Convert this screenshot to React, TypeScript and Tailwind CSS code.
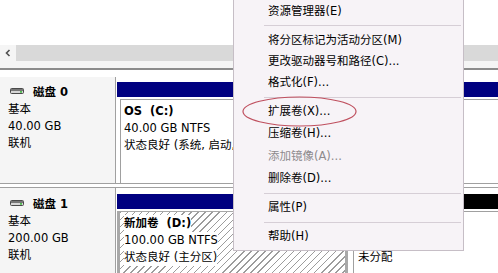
const menuItems: { label?: string; h?: number; disabled?: boolean; sep?: string }[] = [
  { label: "资源管理器(E)", h: 24 },
  { sep: "pt-[1px] pb-[4px]" },
  { label: "将分区标记为活动分区(M)", h: 22 },
  { label: "更改驱动器号和路径(C)...", h: 20 },
  { label: "格式化(F)...", h: 21 },
  { sep: "pt-[4px] pb-[3px]" },
  { label: "扩展卷(X)...", h: 21 },
  { label: "压缩卷(H)...", h: 24 },
  { label: "添加镜像(A)...", h: 21, disabled: true },
  { label: "删除卷(D)...", h: 23 },
  { sep: "pt-[3px] pb-[3px]" },
  { label: "属性(P)", h: 22 },
  { sep: "pt-[3px] pb-[3px]" },
  { label: "帮助(H)", h: 22 },
]

const DiskIcon = () => (
  <svg width="14" height="6" viewBox="0 0 14 6" className="mb-[4px]">
    <rect x="0.5" y="0.5" width="13" height="5" rx="1" fill="#d6d6d6" stroke="#4a4a4a" />
    <rect x="1" y="1" width="12" height="2" fill="#777" />
    <rect x="10" y="3.2" width="2" height="1.4" fill="#2fb82f" />
  </svg>
)

const DiskLabel = ({ name, size, top }: { name: string; size: string; top: string }) => (
  <div className={`w-[116px] shrink-0 border-r border-[#a0a0a0] bg-[#f5f5f5] pl-[8px] leading-[17px] ${top}`}>
    <div className="flex items-center gap-[9px] pl-[2px] font-bold">
      <DiskIcon />
      <span>{name}</span>
    </div>
    <div>基本</div>
    <div>{size}</div>
    <div>联机</div>
  </div>
)

export default function App() {
  return (
    <div className="relative h-[273px] w-[498px] overflow-hidden bg-white font-['DejaVu_Sans','Noto_Sans_CJK_SC',sans-serif] text-[11.5px] text-black">
      {/* volume list pane */}
      <div className="h-[45px]" />
      <div className="flex h-[16px]">
        <div className="flex w-[16px] items-center justify-center bg-[#f5f5f5]">
          <svg width="6" height="8" viewBox="0 0 6 8">
            <path d="M4.5 1 L1.5 4 L4.5 7" fill="none" stroke="#505050" strokeWidth="1.6" />
          </svg>
        </div>
        <div className="flex-1 bg-[#d9d9d9]" />
      </div>
      <div className="h-[7px] bg-[#f5f5f5]" />
      <div className="h-[2px] bg-[#8c8c8c]" />
      <div className="h-[7px]" />

      {/* disk 0 */}
      <div className="flex h-[107px] border-b border-[#a0a0a0]">
        <DiskLabel name="磁盘 0" size="40.00 GB" top="pt-[7px]" />
        <div className="flex min-w-0 flex-1 flex-col pl-[1px] pt-[5px]">
          <div className="h-[15px] bg-[#000080]" />
          <div className="ml-[3px] mt-[2px] flex-1 overflow-hidden whitespace-nowrap border-l border-t border-[#a0a0a0] bg-white pl-[3px] pt-[3px] leading-[17px]">
            <div className="whitespace-pre font-bold">OS  (C:)</div>
            <div>40.00 GB NTFS</div>
            <div className="w-[109px] overflow-hidden">状态良好 (系统, 启动, 页面文件, 活动, 故障转储, 主分区)</div>
          </div>
        </div>
      </div>

      {/* disk 1 */}
      <div className="mt-[3px] flex h-[90px] border-t border-[#a0a0a0]">
        <DiskLabel name="磁盘 1" size="200.00 GB" top="pt-[8px]" />
        <div className="flex min-w-0 flex-1 pt-[6px]">
          <div className="flex w-[232px] shrink-0 flex-col pl-[1px]">
            <div className="h-[15px] bg-[#000080]" />
            <div className="mt-[2px] flex-1 border-x-[3px] border-t border-[#a8a8a8] bg-white bg-[repeating-linear-gradient(135deg,#9c9c9c_0px,#9c9c9c_1px,transparent_1px,transparent_5px)] pl-[4px] pt-[3px] leading-[17px] whitespace-nowrap">
              <div className="w-fit whitespace-pre bg-white font-bold">新加卷  (D:)</div>
              <div className="w-fit bg-white">100.00 GB NTFS</div>
              <div className="w-fit bg-white">状态良好 (主分区)</div>
            </div>
          </div>
          <div className="flex min-w-0 flex-1 flex-col pl-[2px]">
            <div className="h-[15px] bg-black" />
            <div className="ml-[3px] mt-[2px] flex-1 border-l border-t border-[#a0a0a0] bg-white pl-[4px] pt-[3px] leading-[17px] whitespace-nowrap">
              <div>&nbsp;</div>
              <div>100.00 GB</div>
              <div>未分配</div>
            </div>
          </div>
        </div>
      </div>

      {/* context menu */}
      <div className="absolute left-[233px] top-0 flex h-[251px] w-[231px] flex-col border-x border-b border-[#c6bec6] bg-[#f7f3f7] pb-[2px]">
        {menuItems.map((item, i) =>
          item.sep ? (
            <div key={i} className={`ml-[30px] mr-[2px] ${item.sep}`}>
              <div className="h-px bg-[#d6ced6]" />
            </div>
          ) : (
            <div
              key={i}
              style={{ height: item.h }}
              className={`flex items-center pl-[34px] whitespace-nowrap ${item.disabled ? "text-[#8d8a8d]" : "text-black"}`}
            >
              {item.label}
            </div>
          )
        )}
      </div>

      {/* annotation around 扩展卷 */}
      <svg className="absolute left-[242px] top-[96px]" width="116" height="32" viewBox="0 0 116 32">
        <ellipse cx="57.5" cy="15.5" rx="56.5" ry="14.5" fill="none" stroke="#bf4f5e" strokeWidth="1.2" />
      </svg>
    </div>
  )
}
